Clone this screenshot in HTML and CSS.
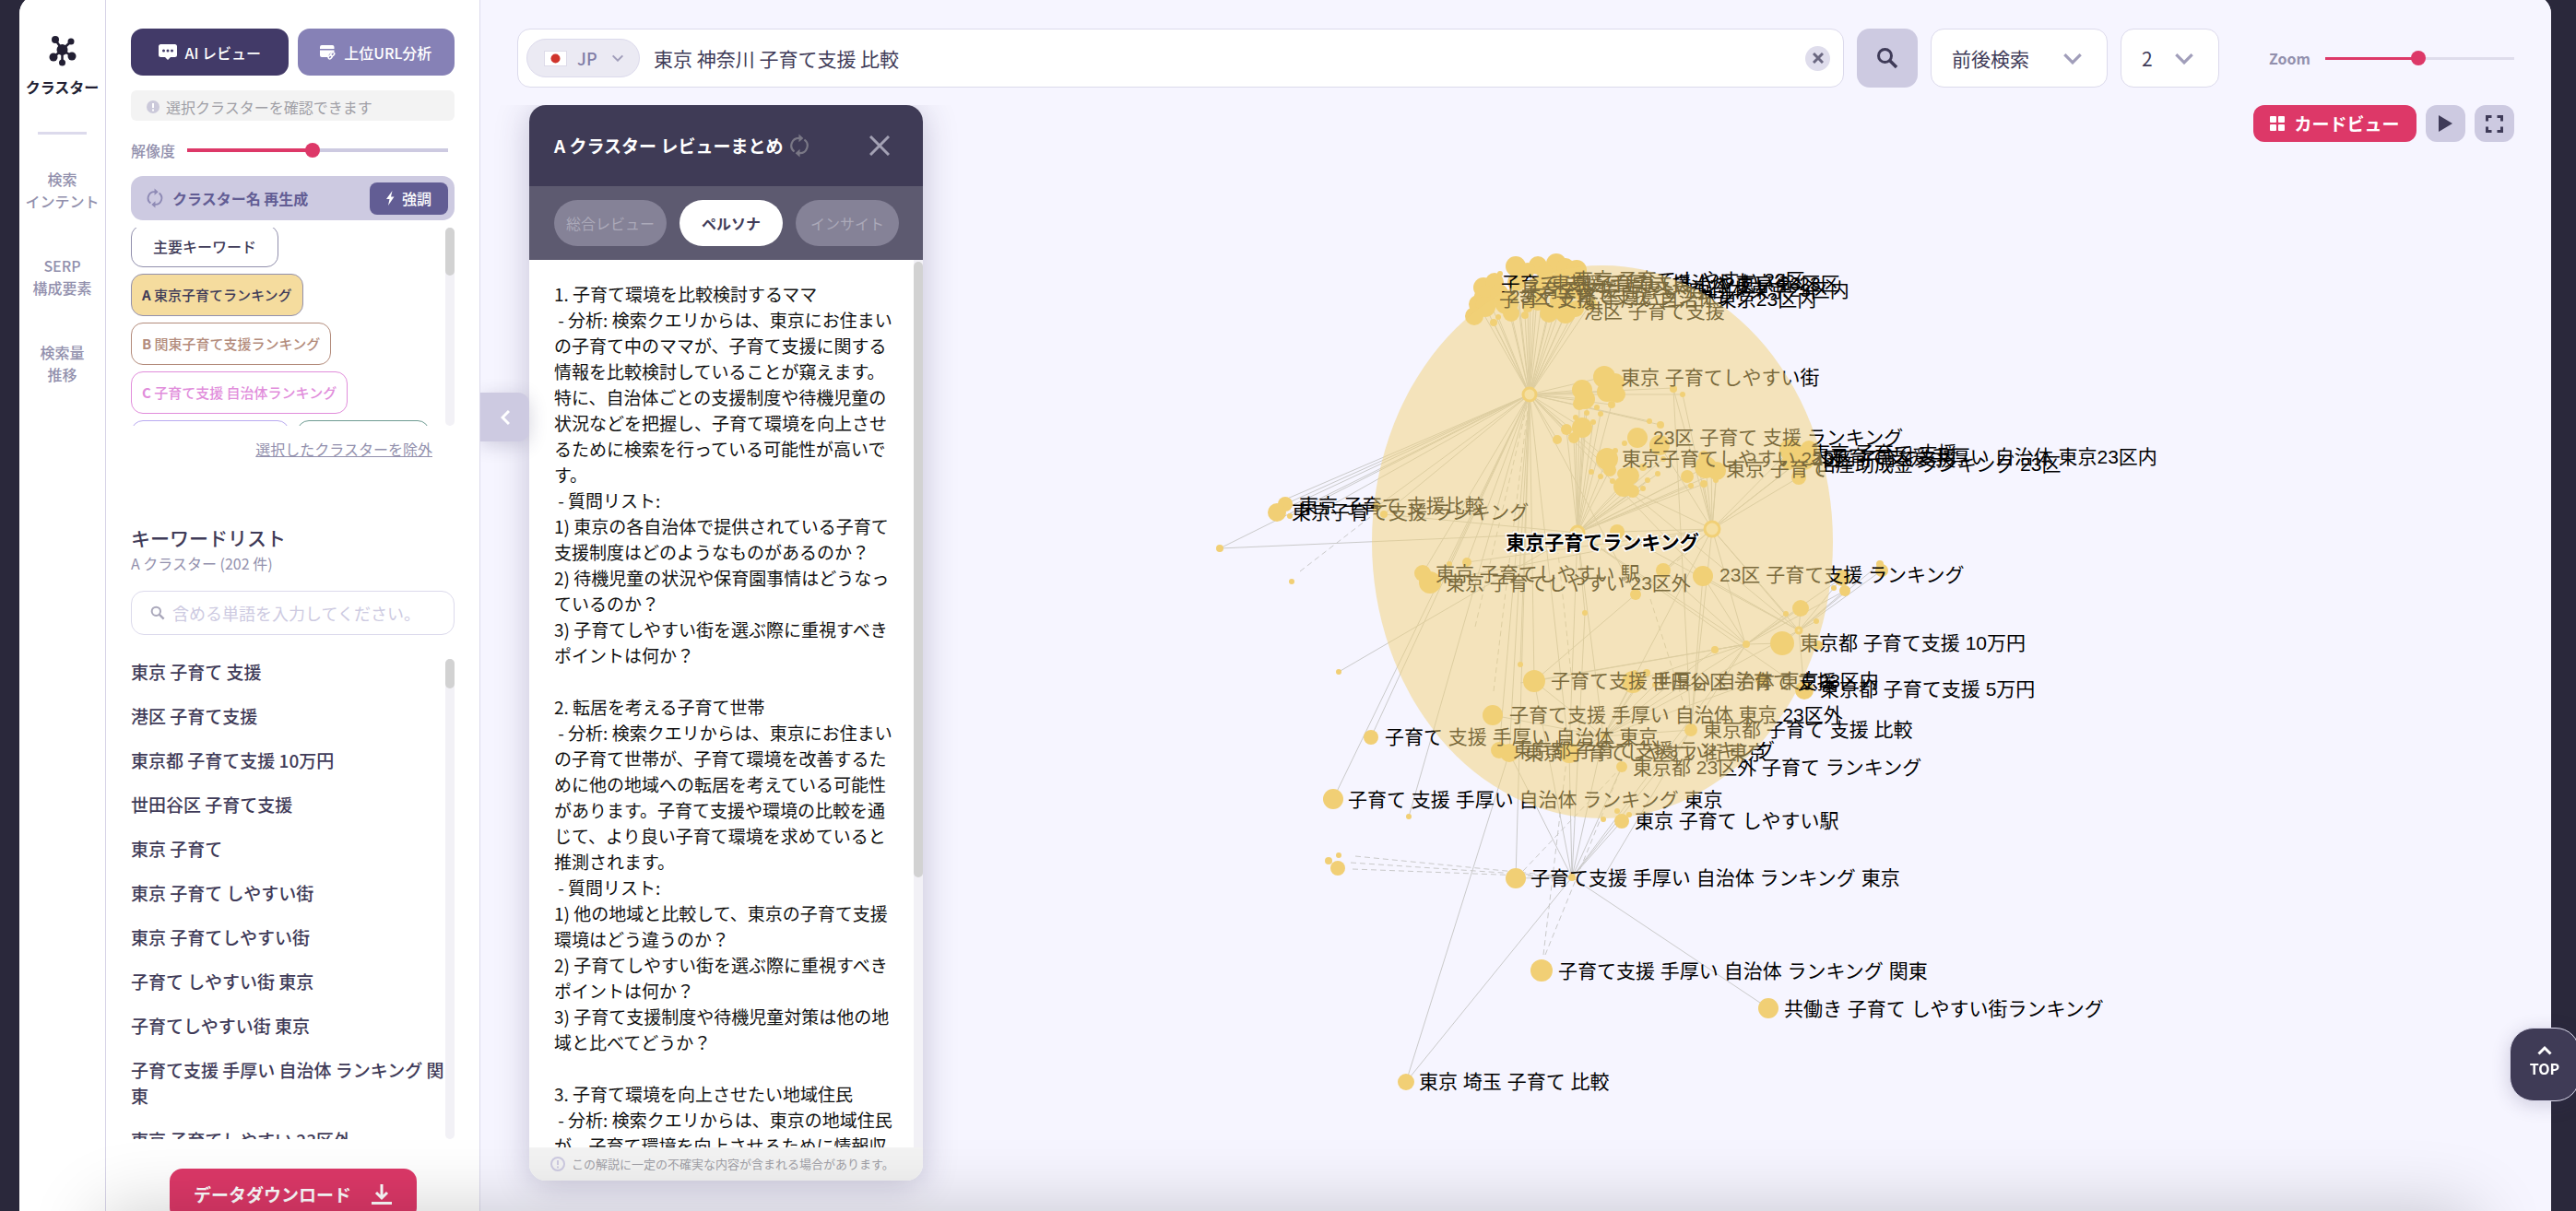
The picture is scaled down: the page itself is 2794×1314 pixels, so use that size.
FILE: index.html
```html
<!DOCTYPE html>
<html lang="ja">
<head>
<meta charset="utf-8">
<meta name="viewport" content="width=device-width, initial-scale=1">
<title>クラスター</title>
<link rel="stylesheet" href="styles.css">
</head>
<body>
<svg class="sprite" aria-hidden="true">
  <symbol id="chevron" viewBox="0 0 20 12"><path d="M2 2l8 8 8-8" fill="none" stroke="currentColor" stroke-width="3"/></symbol>
  <symbol id="refresh" viewBox="0 0 18 24"><path d="M4 18A7.500 7.500 0 0 1 9 4.500M14 6A7.500 7.500 0 0 1 9 19.500" fill="none" stroke="currentColor" stroke-width="2"/><path d="M8.500 0.500L13 4.500 8.500 8.500zM9.500 15.500L5 19.500 9.500 23.500z" fill="currentColor"/></symbol>
  <symbol id="search" viewBox="0 0 24 24"><circle cx="9.500" cy="9.500" r="7" fill="none" stroke="currentColor" stroke-width="3"/><path d="M14.500 14.500l7.500 7.500" stroke="currentColor" stroke-width="3.500"/></symbol>
</svg>
<div class="app">
  <nav class="rail">
    <a class="rail-item current" href="#cluster">
      <svg width="30" height="34" viewBox="0 0 30 34" fill="currentColor"><g stroke="currentColor" stroke-width="2.500"><path d="M14.500 16L7 5M14.500 16L24 7M14.500 16L5 24M14.500 16L25 23M14.500 16v15"/></g><circle cx="14.500" cy="16" r="6"/><circle cx="7" cy="5" r="4"/><circle cx="24" cy="7" r="3.500"/><circle cx="5" cy="24" r="4.500"/><circle cx="25" cy="23" r="4.500"/><circle cx="14.500" cy="30" r="3.500"/></svg>
      <span>クラスター</span>
    </a>
    <hr class="rail-rule">
    <a class="rail-item" href="#intent">検索<br>インテント</a>
    <a class="rail-item" href="#serp">SERP<br>構成要素</a>
    <a class="rail-item" href="#volume">検索量<br>推移</a>
  </nav>

  <aside class="sidebar">
    <div class="button-pair">
      <button class="btn btn-dark" type="button"><svg width="20" height="17" viewBox="0 0 20 17"><path d="M2.500 0h15A2.500 2.500 0 0 1 20 2.500v9a2.500 2.500 0 0 1-2.500 2.500H13l-3 3-3-3H2.500A2.500 2.500 0 0 1 0 11.500v-9A2.500 2.500 0 0 1 2.500 0z" fill="#fff"/><g fill="#423a68"><circle cx="5.500" cy="7" r="1.500"/><circle cx="10" cy="7" r="1.500"/><circle cx="14.500" cy="7" r="1.500"/></g></svg>AI レビュー</button>
      <button class="btn btn-mid" type="button"><svg width="17" height="16" viewBox="0 0 17 16"><path d="M0 4V2a2 2 0 0 1 2-2h11.500a2 2 0 0 1 2 2v2zM0 5.500h15.500v1.500c-3 0-6 2.500-6.500 6H2a2 2 0 0 1-2-2z" fill="#fff"/><g fill="none" stroke="#fff" stroke-width="1.500"><rect x="12" y="7.500" width="3" height="4.500" rx="1.500" transform="rotate(45 13.500 10)"/><rect x="9.500" y="10.500" width="3" height="4.500" rx="1.500" transform="rotate(45 11 13)"/></g></svg>上位URL分析</button>
    </div>
    <p class="note"><svg width="14" height="14" viewBox="0 0 14 14"><circle cx="7" cy="7" r="7" fill="#cbc9da"/><path d="M7 3v5M7 9.500v2" stroke="#fff" stroke-width="2"/></svg>選択クラスターを確認できます</p>
    <div class="slider-row">
      <label for="resolution">解像度</label>
      <input class="slider" id="resolution" type="range" min="0" max="100" value="48">
    </div>
    <div class="rename">
      <button class="rename-main" type="button"><svg width="18" height="22"><use href="#refresh"/></svg>クラスター名 再生成</button>
      <button class="rename-boost" type="button"><svg width="9" height="16" viewBox="0 0 9 16"><path d="M6.500 0L0 9h3.500L2 16l6.500-9.500H5z" fill="#fff"/></svg>強調</button>
    </div>
    <div class="scroll chips-scroll">
      <div class="chips">
        <button class="chip chip-all" type="button">主要キーワード</button>
        <button class="chip chip-a" type="button"><b>A</b> 東京子育てランキング</button>
        <button class="chip chip-b" type="button"><b>B</b> 関東子育て支援ランキング</button>
        <button class="chip chip-c" type="button"><b>C</b> 子育て支援 自治体ランキング</button>
        <div class="chip-line">
          <button class="chip chip-d" type="button" aria-label="D"></button>
          <button class="chip chip-e" type="button" aria-label="E"></button>
        </div>
      </div>
      <div class="bar"><div class="thumb thumb-chips"></div></div>
    </div>
    <a class="exclude" href="#exclude">選択したクラスターを除外</a>
    <h2>キーワードリスト</h2>
    <p class="sub">A クラスター (202 件)</p>
    <label class="filter"><svg width="16" height="16"><use href="#search"/></svg><input type="text" aria-label="キーワード" placeholder="含める単語を入力してください。"></label>
    <div class="scroll words-scroll">
      <ul class="words">
        <li>東京 子育て 支援</li>
        <li>港区 子育て支援</li>
        <li>東京都 子育て支援 10万円</li>
        <li>世田谷区 子育て支援</li>
        <li>東京 子育て</li>
        <li>東京 子育て しやすい街</li>
        <li>東京 子育てしやすい街</li>
        <li>子育て しやすい街 東京</li>
        <li>子育てしやすい街 東京</li>
        <li>子育て支援 手厚い 自治体 ランキング 関東</li>
        <li>東京 子育てしやすい 23区外</li>
      </ul>
      <div class="bar"><div class="thumb thumb-words"></div></div>
    </div>
    <button class="download" type="button">データダウンロード<svg width="22" height="22" viewBox="0 0 22 22" fill="none" stroke="#fff" stroke-width="3"><path d="M11 0v14M5 9l6 6 6-6M0 20.500h22"/></svg></button>
  </aside>

  <main class="main">
    <header class="toolbar">
      <div class="query">
        <label class="country"><svg width="25" height="17" viewBox="0 0 25 17"><rect x=".5" y=".5" width="24" height="16" fill="#fff" stroke="#dddbe9"/><circle cx="12.500" cy="8.500" r="5" fill="#d0342c"/></svg><select aria-label="国"><option>JP</option></select><svg class="arrow" width="14" height="8"><use href="#chevron"/></svg></label>
        <input type="text" aria-label="検索キーワード" value="東京 神奈川 子育て支援 比較">
        <button class="clear" type="button" aria-label="クリア"><svg width="12" height="12" viewBox="0 0 12 12"><path d="M1 1l10 10M11 1L1 11" stroke="#6a6780" stroke-width="3"/></svg></button>
      </div>
      <button class="go" type="button" aria-label="検索"><svg width="24" height="24"><use href="#search"/></svg></button>
      <label class="pick"><select aria-label="検索種別"><option>前後検索</option></select><svg class="arrow" width="22" height="13"><use href="#chevron"/></svg></label>
      <label class="pick"><select aria-label="階層"><option>2</option></select><svg class="arrow" width="22" height="13"><use href="#chevron"/></svg></label>
      <div class="zoom">
        <label for="zoom">Zoom</label>
        <input class="slider slider-zoom" id="zoom" type="range" min="0" max="100" value="49">
      </div>
    </header>

    <section class="stage">
      <svg class="graph" viewBox="521 114 2246 1200" role="img" aria-label="東京子育てランキング">
        <g id="edges"></g>
        <g id="nodes"></g>
        <g class="labels">
          <text x="1707" y="311">東京 子育て しやすい 23区</text>
          <text x="1628" y="315">子育て 支援 手厚い 自治体 東京 23区</text>
          <text x="1682" y="315">東京 子育て支援 しやすい街 23区</text>
          <text x="1650" y="322">子育て支援 手厚い 自治体 東京23区内</text>
          <text x="1637" y="329">23区 子育て支援 ランキング</text>
          <text x="1626" y="332">子育て支援 手厚い自治体東京23区内</text>
          <text x="1718" y="345">港区 子育て支援</text>
          <text x="1758" y="417">東京 子育てしやすい街</text>
          <text x="1793" y="482">23区 子育て 支援 ランキング</text>
          <text x="1759" y="505">東京子育てしやすい 23区</text>
          <text x="1872" y="516">東京 子育て</text>
          <text x="1964" y="499">東京 子育て 支援</text>
          <text x="1966" y="505">23区 子育て支援</text>
          <text x="1984" y="503">子育て支援 手厚い 自治体 東京23区内</text>
          <text x="1970" y="511">出産助成金 ランキング 23区</text>
          <text x="1409" y="556">東京 子育て 支援比較</text>
          <text x="1401" y="563">東京子育て支援 ランキング</text>
          <text x="1557" y="630">東京 子育てしやすい 駅</text>
          <text x="1568" y="640">東京 子育てしやすい 23区外</text>
          <text x="1865" y="631">23区 子育て支援 ランキング</text>
          <text x="1952" y="705">東京都 子育て支援 10万円</text>
          <text x="1682" y="746">子育て支援 手厚い 自治体 東京23区内</text>
          <text x="1791" y="747">世田谷区 子育て 支援</text>
          <text x="1974" y="755">東京都 子育て支援 5万円</text>
          <text x="1637" y="783">子育て支援 手厚い 自治体 東京 23区外</text>
          <text x="1847" y="799">東京都 子育て 支援 比較</text>
          <text x="1502" y="807">子育て 支援 手厚い 自治体 東京</text>
          <text x="1641" y="821">東京都 子育て支援 ランキング</text>
          <text x="1653" y="824">東京 子育てしやすい街 東京</text>
          <text x="1771" y="840">東京都 23区外 子育て ランキング</text>
          <text x="1462" y="875">子育て 支援 手厚い 自治体 ランキング 東京</text>
          <text x="1773" y="898">東京 子育て しやすい駅</text>
          <text x="1660" y="960">子育て支援 手厚い 自治体 ランキング 東京</text>
          <text x="1690" y="1061">子育て支援 手厚い 自治体 ランキング 関東</text>
          <text x="1935" y="1102">共働き 子育て しやすい街ランキング</text>
          <text x="1539" y="1181">東京 埼玉 子育て 比較</text>
        </g>
        <ellipse cx="1738" cy="588" rx="250" ry="300" fill="#f2d177" fill-opacity=".5"/>
        <text class="cluster-name" x="1738" y="596">東京子育てランキング</text>
      </svg>

      <button class="collapse" type="button" aria-label="閉じる"><svg width="10" height="16" viewBox="0 0 10 16"><path d="M9 1L2 8l7 7" fill="none" stroke="#fff" stroke-width="3"/></svg></button>

      <article class="review">
        <header class="review-head">
          <h1>A クラスター レビューまとめ</h1>
          <button class="icon-btn" type="button" aria-label="再生成"><svg width="20" height="26"><use href="#refresh"/></svg></button>
          <button class="icon-btn close" type="button" aria-label="閉じる"><svg width="22" height="22" viewBox="0 0 22 22"><path d="M1 1l20 20M21 1L1 21" stroke="#a3a1b4" stroke-width="3"/></svg></button>
        </header>
        <div class="tabs">
          <button class="tab tab-wide" type="button">総合レビュー</button>
          <button class="tab active" type="button">ペルソナ</button>
          <button class="tab" type="button">インサイト</button>
        </div>
        <div class="scroll review-body">
<div class="review-text">1. 子育て環境を比較検討するママ
 - 分析: 検索クエリからは、東京にお住まいの子育て中のママが、子育て支援に関する情報を比較検討していることが窺えます。特に、自治体ごとの支援制度や待機児童の状況などを把握し、子育て環境を向上させるために検索を行っている可能性が高いです。
 - 質問リスト:
1) 東京の各自治体で提供されている子育て支援制度はどのようなものがあるのか？
2) 待機児童の状況や保育園事情はどうなっているのか？
3) 子育てしやすい街を選ぶ際に重視すべきポイントは何か？

2. 転居を考える子育て世帯
 - 分析: 検索クエリからは、東京にお住まいの子育て世帯が、子育て環境を改善するために他の地域への転居を考えている可能性があります。子育て支援や環境の比較を通じて、より良い子育て環境を求めていると推測されます。
 - 質問リスト:
1) 他の地域と比較して、東京の子育て支援環境はどう違うのか？
2) 子育てしやすい街を選ぶ際に重視すべきポイントは何か？
3) 子育て支援制度や待機児童対策は他の地域と比べてどうか？

3. 子育て環境を向上させたい地域住民
 - 分析: 検索クエリからは、東京の地域住民が、子育て環境を向上させるために情報収</div>
          <div class="bar"><div class="thumb thumb-review"></div></div>
        </div>
        <footer class="review-foot"><svg width="16" height="16" viewBox="0 0 16 16" fill="none" stroke="#cdcae1" stroke-width="2"><circle cx="8" cy="8" r="7"/><path d="M8 4v5M8 10.500v2"/></svg>この解説に一定の不確実な内容が含まれる場合があります。</footer>
      </article>

      <div class="actions">
        <button class="card-view" type="button"><svg width="16" height="16" viewBox="0 0 16 16" fill="#fff"><rect width="7" height="7" rx="1"/><rect x="9" width="7" height="7" rx="1"/><rect y="9" width="7" height="7" rx="1"/><rect x="9" y="9" width="7" height="7" rx="1"/></svg>カードビュー</button>
        <button class="tool" type="button" aria-label="再生"><svg width="15" height="18" viewBox="0 0 15 18"><path d="M0 0l15 9-15 9z" fill="#3f3b58"/></svg></button>
        <button class="tool" type="button" aria-label="全画面"><svg width="19" height="19" viewBox="0 0 19 19"><path d="M1.500 6.500v-5h5M12.500 1.500h5v5M17.500 12.500v5h-5M6.500 17.500h-5v-5" fill="none" stroke="#3f3b58" stroke-width="3"/></svg></button>
      </div>
    </section>
  </main>
</div>
<div class="edge-shade"></div>
<a class="to-top" href="#top"><svg width="16" height="11" viewBox="0 0 16 11"><path d="M1.500 9.500L8 3l6.500 6.500" fill="none" stroke="#fff" stroke-width="3"/></svg>TOP</a>
<script src="graph.js"></script>
</body>
</html>
```
FILE: graph.js
```js
// Keyword nodes: x, y, radius.
const nodes = [
  [1644,289,11],[1668,288,10],[1688,286,11],[1698,290,10],[1710,293,11],[1657,293,8],[1676,296,9],
  [1609,312,11],[1621,306,10],[1611,322,12],[1603,330,10],[1611,333,11],[1599,343,10],[1627,297,3],
  [1620,350,4],[1625,344,3],[1639,340,9],[1634,328,13],[1654,342,4],[1680,340,10],[1698,340,11],
  [1709,335,9],[1725,330,7],[1657,333,6],[1645,306,10],[1668,310,10],[1690,308,12],[1712,314,11],[1668,328,9],[1692,326,11],[1626,318,10],
  [1740,409,12],[1752,415,10],[1743,425,11],[1754,428,9],[1716,423,11],[1719,433,11],[1713,438,7],
  [1748,439,4],[1732,442,3],[1721,448,3],[1736,449,3],[1709,453,3],[1716,464,11],[1699,466,6],
  [1707,475,6],[1689,477,5],[1728,458,3],[1815,422,4],[1825,428,3],[1789,457,3],[1801,461,4],
  [1776,475,11],[1762,481,3],[1800,483,11],[1804,498,3],[1743,498,12],[1752,489,3],[1746,510,7],
  [1768,516,10],[1761,528,11],[1771,533,7],[1760,514,6],[1726,512,3],[1736,517,3],[1782,507,4],[1798,514,3],
  [1787,521,3],[1782,530,3],[1749,522,3],[1830,517,7],[1850,507,12],[1848,495,6],[1862,511,10],
  [1848,525,4],[1861,521,3],[1834,527,3],[1942,488,12],[1956,497,13],[1951,518,8],[1940,502,8],[1962,487,9],
  [1754,577,8],[1804,619,8],[1847,625,11],[1774,645,6],[1543,622,9],[1551,632,12],[1572,612,3],
  [1591,610,5],[1493,550,5],[1501,558,4],[1394,547,8],[1385,556,10],[1399,560,3],[1323,595,4],
  [1401,631,3],[1452,729,3],[1487,800,8],[1446,867,11],[1528,886,3],[1441,934,4],[1452,928,3],
  [1451,942,8],[1644,953,11],[1705,952,4],[1649,721,3],[1719,665,3],[1664,739,12],[1619,776,11],
  [1626,814,9],[1637,817,10],[1702,817,11],[1771,740,12],[1786,730,4],[1795,743,3],[1834,792,7],
  [1759,832,6],[1739,799,3],[1759,891,8],[1754,880,3],[1767,884,3],[1739,889,3],[1860,705,4],
  [1894,699,4],[1933,698,13],[1953,660,9],[1937,666,3],[1970,674,3],[1972,700,5],[1998,627,9],
  [2001,641,6],[1989,638,3],[2041,619,7],[2039,612,4],[1957,749,10],[1911,737,7],[1773,730,3],
  [1672,1053,12],[1918,1094,11],[1525,1174,9]
];

// Hollow nodes that gather many keywords.
const rings = [[1659,428,7],[1711,578,7],[1857,574,8],[1951,684,3]];

// Edges fan out from each origin.
const fans = [
  [[1659,428], [[1609,312],[1611,333],[1603,330],[1620,350],[1625,344],[1639,340],[1632,318],[1644,310],[1648,330],[1654,342],[1657,333],[1660,300],[1664,320],[1668,310],[1672,330],[1680,340],[1684,316],[1690,326],[1694,330],[1698,340],[1703,330],[1709,335],[1716,330],[1725,330],[1740,409],[1716,423],[1719,433],[1743,425],[1815,421],[1825,428],[1789,457],[1748,439],[1716,464],[1699,466],[1707,475],[1689,477],[1394,542],[1394,547],[1385,556],[1399,560],[1430,556],[1323,595],[1493,550],[1501,558],[1543,622],[1591,610],[1572,612],[1446,867],[1487,800],[1528,886],[1649,721],[1664,739],[1637,817],[1644,953],[1626,814],[1702,817],[1801,461],[1743,498],[1746,510],[1847,625],[1774,645]]],
  [[1711,578], [[1699,466],[1707,475],[1716,464],[1722,433],[1719,448],[1728,458],[1736,449],[1748,439],[1709,453],[1713,438],[1743,498],[1746,510],[1761,528],[1768,516],[1771,533],[1782,530],[1787,521],[1798,514],[1830,517],[1850,507],[1848,525],[1834,527],[1862,513],[1804,498],[1501,558],[1323,595],[1452,729],[1702,817],[1739,799],[1719,665],[1957,749],[1893,699]]],
  [[1857,574], [[1848,525],[1850,507],[1861,521],[1862,511],[1856,500],[1942,488],[1956,497],[1951,518],[1945,505],[1800,483],[1761,528],[1754,577],[1591,610],[1551,632],[1804,619],[1893,699],[1951,684],[1774,645],[1739,799],[1834,792],[1937,666]]],
  [[1894,699], [[1804,619],[1847,625],[1933,698],[1953,660],[1998,627],[2001,641],[1860,705],[1771,740],[1649,741],[1664,739],[1834,792],[1739,799],[1705,952],[1937,666]]],
  [[1951,684], [[1847,625],[1953,660],[1998,627],[2001,641],[2041,619],[2039,612],[1933,698],[1957,749],[1761,528],[1754,577],[1970,674],[1739,799]]],
  [[1739,799], [[1771,740],[1786,730],[1795,743],[1860,705],[1911,737],[1834,792],[1664,739],[1619,776],[1702,817],[1774,745]]],
  [[1705,952], [[1644,953],[1637,817],[1664,739],[1702,817],[1719,665],[1739,799],[1759,832],[1759,891],[1834,792],[1525,1174],[1918,1094]]],
  [[1774,645], [[1664,739]]],
  [[1834,792], [[1740,950],[1847,625],[1815,422]]],
  [[1525,1174], [[1637,817]]],
  [[1825,428], [[1857,574]]],
  [[1815,422], [[1857,574]]]
];

const dashed = [
  [1470,929,1705,952],[1465,936,1705,952],[1467,943,1705,952],[1410,620,1490,558],[1674,1036,1700,817],
  [1676,1036,1759,832],[1652,945,1759,832],[1600,680,1659,428],[1620,750,1659,428],[1705,740,1690,600],
  [1780,640,1830,600],[1790,650,1825,760]
];

const ns = "http://www.w3.org/2000/svg";
const add = (parent, tag, attrs) => {
  const el = document.createElementNS(ns, tag);
  for (const key in attrs) el.setAttribute(key, attrs[key]);
  parent.appendChild(el);
};

const edgeLayer = document.getElementById("edges");
const nodeLayer = document.getElementById("nodes");

for (const [[x, y], ends] of fans) {
  add(edgeLayer, "path", { class: "edge", d: ends.map(([a, b]) => `M${x} ${y}L${a} ${b}`).join("") });
}
for (const [a, b, c, d] of dashed) {
  add(edgeLayer, "path", { class: "edge edge-dashed", d: `M${a} ${b}L${c} ${d}` });
}
for (const [cx, cy, r] of nodes) add(nodeLayer, "circle", { class: "node", cx, cy, r });
for (const [cx, cy, r] of rings) add(nodeLayer, "circle", { class: "ring", cx, cy, r });
```
FILE: styles.css
```css
* { box-sizing: border-box; }

html, body { height: 100%; }

body {
  margin: 0;
  overflow: hidden;
  background: #2a283b;
  color: #3f3b58;
  font-family: "Noto Sans CJK JP", "Noto Sans", sans-serif;
  font-size: 16px;
  line-height: 24px;
}

h1, h2, p, ul { margin: 0; padding: 0; }
ul { list-style: none; }
a { color: inherit; text-decoration: none; }
svg { flex: none; display: block; }

button, input, select {
  margin: 0;
  padding: 0;
  border: 0;
  background: none;
  color: inherit;
  font: inherit;
  outline: 0;
}

button { cursor: pointer; white-space: nowrap; }
select { appearance: none; }
.sprite { position: absolute; width: 0; height: 0; }

.app {
  display: flex;
  height: calc(100vh + 5px);
  margin: -5px 27px 0 21px;
  padding-top: 5px;
  border-radius: 20px 20px 0 0;
  overflow: hidden;
  background: linear-gradient(90deg, #fff 400px, #f6f5ff 500px);
}

/* Left rail */
.rail {
  flex: none;
  display: flex;
  flex-direction: column;
  align-items: center;
  width: 94px;
  padding-top: 38px;
  border-right: 1px solid #d6d3e6;
  background: #fff;
  color: #9290ad;
  font-weight: 500;
  text-align: center;
}

.rail-item { display: block; margin-bottom: 46px; white-space: nowrap; }

.rail-item.current {
  display: flex;
  flex-direction: column;
  align-items: center;
  gap: 10px;
  margin-bottom: 37px;
  color: #221f33;
  font-weight: 700;
}

.rail-rule { width: 53px; height: 3px; margin: 0 0 36px; border: 0; background: #dcdaec; }

/* Sidebar */
.sidebar {
  flex: none;
  display: flex;
  flex-direction: column;
  width: 406px;
  padding: 31px 27px 0;
  border-right: 1px solid #dcdaec;
  background: #fff;
}

.sidebar > * { flex-shrink: 0; }

.button-pair { display: grid; grid-template-columns: 1fr 1fr; gap: 10px; }

.btn {
  display: flex;
  align-items: center;
  justify-content: center;
  gap: 9px;
  height: 51px;
  border-radius: 13px;
  color: #fff;
  font-weight: 500;
}

.btn-dark { background: #423a68; }
.btn-mid { background: #8681b6; }

.note {
  display: flex;
  align-items: center;
  gap: 7px;
  height: 33px;
  margin-top: 16px;
  padding: 2px 17px 0;
  border-radius: 6px;
  background: #f3f3f3;
  color: #a09fa6;
}

.slider-row {
  display: flex;
  align-items: center;
  gap: 13px;
  height: 28px;
  margin: 18px 7px 14px 0;
  color: #9290ad;
  font-weight: 500;
}

.slider {
  flex: 1;
  min-width: 0;
  height: 16px;
  appearance: none;
  background: linear-gradient(90deg, #dd3868 48%, #cdcae1 48%) center / 100% 4px no-repeat;
}

.slider-zoom {
  background: linear-gradient(90deg, #dd3868 49%, #dfddec 49%) center / 100% 3px no-repeat;
}

.slider::-webkit-slider-thumb {
  appearance: none;
  width: 16px;
  height: 16px;
  border-radius: 50%;
  background: #dd3868;
}

.rename {
  display: flex;
  align-items: center;
  justify-content: space-between;
  height: 48px;
  padding: 0 7px 0 17px;
  border-radius: 13px;
  background: #cdcae1;
}

.rename-main { display: flex; align-items: center; gap: 10px; color: #625d94; font-weight: 700; }
.rename-main svg { color: #8e8ab5; }

.rename-boost {
  display: flex;
  align-items: center;
  justify-content: center;
  gap: 8px;
  width: 85px;
  height: 35px;
  border-radius: 8px;
  background: #625d94;
  color: #fff;
  font-weight: 500;
}

.scroll { display: flex; justify-content: space-between; overflow: hidden; }
.bar { flex: none; width: 10px; border-radius: 5px; background: #f2f1f6; }
.thumb { border-radius: 5px; background: #d2d2d2; }
.thumb-chips { height: 52px; }
.thumb-words { height: 32px; }

.chips-scroll { height: 215px; margin-top: 8px; }

.chips {
  display: flex;
  flex-direction: column;
  align-items: flex-start;
  gap: 7px;
  margin-top: -3px;
}

.chip-line { display: flex; gap: 8px; }

.chip {
  flex: none;
  height: 46px;
  padding: 0 11px;
  border: 1px solid;
  border-radius: 13px;
  font-size: 15px;
  font-weight: 500;
}

.chip-all { padding: 0 23px; border-color: #9290ad; font-size: 16px; }
.chip-a { border-color: #9290ad; background: #f5dc9e; }
.chip-b { color: #b38b7b; }
.chip-c { color: #e18ddb; }
.chip-d { width: 172px; color: #b9aaf0; }
.chip-e { width: 144px; color: #6f9c93; }

.exclude {
  align-self: flex-end;
  margin: 13px 24px 68px 0;
  color: #9290ad;
  text-decoration: underline;
}

h2 { font-size: 21px; line-height: 32px; font-weight: 500; }
.sub { color: #9290ad; }

.filter {
  display: flex;
  align-items: center;
  gap: 8px;
  height: 48px;
  margin-top: 18px;
  padding: 0 20px;
  border: 1px solid #dcdaec;
  border-radius: 14px;
  color: #aaa8bb;
}

.filter input { flex: 1; min-width: 0; color: #3f3b58; font-size: 18px; }
.filter input::placeholder { color: #cdcae1; }

.words-scroll { height: 521px; margin-top: 26px; }

.words {
  display: flex;
  flex-direction: column;
  gap: 20px;
  font-size: 19px;
  line-height: 28px;
  font-weight: 500;
}

.download {
  display: flex;
  align-items: center;
  justify-content: center;
  align-self: center;
  gap: 22px;
  width: 268px;
  height: 56px;
  margin-top: 32px;
  border-radius: 14px;
  background: #dd3868;
  color: #fff;
  font-size: 19px;
  font-weight: 700;
}

/* Main area */
.main { flex: 1; display: flex; flex-direction: column; min-width: 0; background: #f6f5ff; }

.toolbar { display: flex; gap: 14px; height: 114px; padding: 31px 40px 19px; }

.query {
  flex: 1;
  display: flex;
  align-items: center;
  gap: 15px;
  min-width: 0;
  padding: 0 14px 0 9px;
  border: 1px solid #dcdaec;
  border-radius: 14px;
  background: #fff;
}

.query > input { flex: 1; min-width: 0; font-size: 21px; line-height: 32px; }

.country {
  display: flex;
  align-items: center;
  gap: 11px;
  width: 123px;
  height: 42px;
  padding: 0 16px 0 18px;
  border: 1px solid #dcdaec;
  border-radius: 21px;
  background: #ebeaf3;
  color: #817da6;
  font-size: 18px;
  font-weight: 500;
}

.country .arrow { margin-left: auto; }

.arrow { color: #a19eba; pointer-events: none; }

.clear {
  display: flex;
  align-items: center;
  justify-content: center;
  width: 27px;
  height: 27px;
  border-radius: 50%;
  background: #dfddec;
}

.go {
  display: flex;
  align-items: center;
  justify-content: center;
  width: 66px;
  border-radius: 14px;
  background: #cdcae1;
}

.pick {
  display: flex;
  align-items: center;
  gap: 24px;
  padding: 0 26px 0 22px;
  border: 1px solid #dcdaec;
  border-radius: 14px;
  background: #fff;
  font-size: 21px;
  line-height: 32px;
}

.pick .arrow { margin-left: 12px; }
.pick + .pick { gap: 11px; }

.zoom {
  display: flex;
  align-items: center;
  gap: 16px;
  width: 266px;
  margin-left: 40px;
  color: #9290ad;
  font-weight: 700;
}

.stage {
  position: relative;
  flex: 1;
  display: flex;
  align-items: flex-start;
  min-height: 0;
  padding: 0 40px 33px 0;
  overflow: hidden;
}

.graph { position: absolute; inset: 0; width: 100%; height: 100%; }
.labels { font: 21px "Liberation Sans", "Noto Sans CJK JP", sans-serif; }
.labels text { fill: #000; }
.edge { fill: none; stroke: #c9c9c9; stroke-width: 1; }
.edge-dashed { stroke-dasharray: 6 4; }
.node { fill: #f1cf75; }
.ring { fill: #f8eccb; stroke: #f1cf75; stroke-width: 3; }

.cluster-name {
  fill: #000;
  stroke: #fff;
  stroke-width: 3;
  paint-order: stroke;
  text-anchor: middle;
  font-size: 21px;
  font-weight: 700;
}

.collapse {
  position: relative;
  display: flex;
  align-items: center;
  justify-content: center;
  width: 53px;
  height: 53px;
  margin-top: 312px;
  border-radius: 0 12px 12px 0;
  background: #cdcae1;
  box-shadow: 0 4px 20px rgba(50, 45, 90, .2);
  z-index: 2;
}

.review {
  position: relative;
  display: flex;
  flex-direction: column;
  width: 427px;
  height: 100%;
  border-radius: 18px;
  background: #fff;
  box-shadow: 0 4px 36px rgba(50, 45, 90, .25);
}

.review-head {
  flex: none;
  display: flex;
  align-items: center;
  gap: 8px;
  height: 88px;
  padding: 0 36px 0 27px;
  border-radius: 18px 18px 0 0;
  background: #3f3b56;
}

h1 { color: #fff; font-size: 19px; line-height: 28px; font-weight: 700; white-space: nowrap; }
.icon-btn { color: #7a7886; }
.close { margin-left: auto; }

.tabs {
  flex: none;
  display: flex;
  align-items: center;
  gap: 14px;
  height: 80px;
  padding: 0 27px;
  background: #5d5a70;
}

.tab {
  flex: none;
  width: 112px;
  height: 50px;
  border-radius: 25px;
  background: #858297;
  color: #aba9b9;
}

.tab-wide { width: 122px; }
.tab.active { background: #fff; color: #3f3b58; font-weight: 700; }

.review-body { flex: 1; min-height: 0; }

.review-text {
  flex: 1;
  padding: 23px 18px 0 27px;
  color: #111;
  font-size: 19px;
  line-height: 28px;
  white-space: pre-wrap;
}

.review-body .bar { padding-top: 2px; border-radius: 0; }
.thumb-review { height: 668px; }

.review-foot {
  flex: none;
  display: flex;
  align-items: center;
  gap: 7px;
  height: 36px;
  padding: 0 23px;
  border-radius: 0 0 18px 18px;
  background: #f3f3f3;
  color: #a09fa6;
  font-size: 13px;
  white-space: nowrap;
}

.actions { position: relative; display: flex; gap: 10px; margin-left: auto; }

.card-view {
  display: flex;
  align-items: center;
  justify-content: center;
  gap: 10px;
  width: 177px;
  height: 40px;
  border-radius: 12px;
  background: #dd3868;
  color: #fff;
  font-size: 19px;
  font-weight: 700;
}

.tool {
  display: flex;
  align-items: center;
  justify-content: center;
  width: 43px;
  height: 40px;
  border-radius: 12px;
  background: #cdcae1;
}

/* Shade rising from the bottom edge of the window */
.edge-shade {
  position: fixed;
  top: 100%;
  left: 110px;
  right: 110px;
  height: 100px;
  box-shadow: 0 0 80px rgba(0, 0, 0, .2);
  pointer-events: none;
  z-index: 3;
}

.to-top {
  position: fixed;
  right: -4px;
  bottom: 119px;
  display: flex;
  flex-direction: column;
  align-items: center;
  justify-content: center;
  gap: 2px;
  width: 76px;
  height: 80px;
  padding-bottom: 6px;
  border: 1px solid #dcdaec;
  border-radius: 26px;
  background: #3f3b56;
  box-shadow: 0 4px 20px rgba(50, 45, 90, .2);
  color: #fff;
  font-weight: 700;
  z-index: 4;
}
```
